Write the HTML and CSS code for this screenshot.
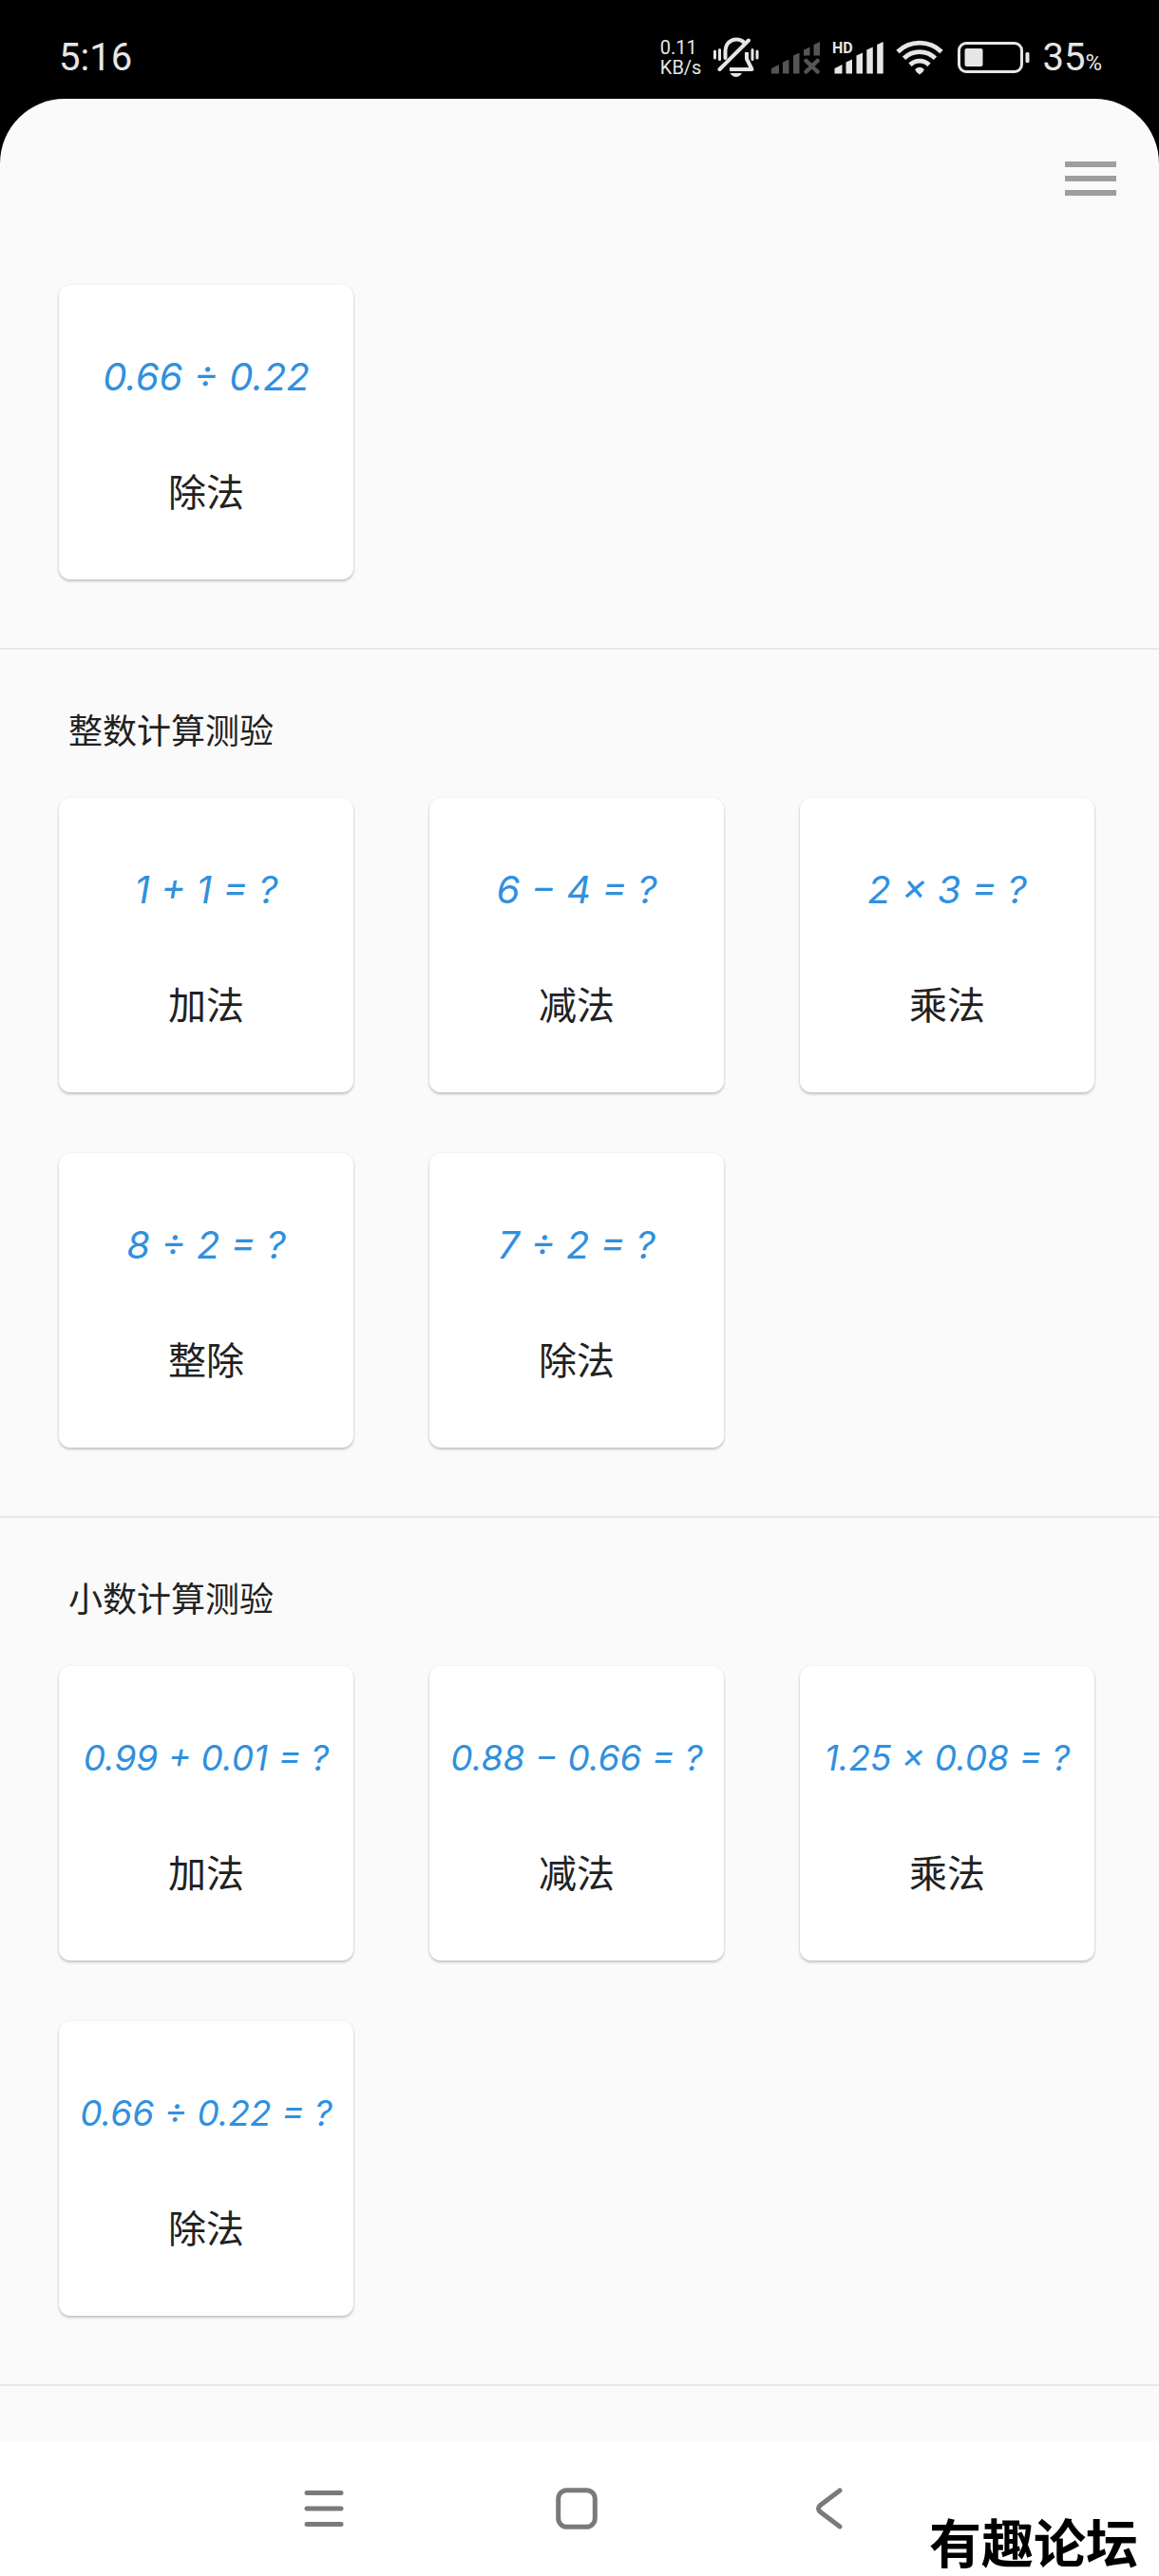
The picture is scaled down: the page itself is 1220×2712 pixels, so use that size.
FILE: index.html
```html
<!DOCTYPE html>
<html lang="zh-CN">
<head>
  <meta charset="utf-8">
  <meta name="viewport" content="width=device-width">
  <title>计算测验</title>
  <link rel="stylesheet" href="styles.css">
</head>
<body>
  <div class="status-bar">
    <span class="time">5:16</span>
    <div class="status-icons">
      <span class="net-speed">0.11<br>KB/s</span>
      <svg class="bell" width="48" height="44" viewBox="0 0 48 44" fill="none" stroke="#e6e6e6" stroke-width="4" stroke-linecap="round" stroke-linejoin="round">
        <path d="M1.5 15v7M6.5 13.5v10M41 13.5v10M46 15v7" stroke-width="3"/>
        <path d="M12.5 22v-7C12.5 7 18 2.500 24 2.500c3 0 6 1 8 3"/>
        <path d="M35 16v7l5.500 11H17" stroke-linecap="butt"/>
        <path d="M6.500 34L37 3.500"/>
        <path d="M17.500 38H30q-2.500 4-6.200 4t-6.300-4z" fill="#e6e6e6" stroke="none"/>
      </svg>
      <svg class="signal" width="51" height="34" viewBox="0 0 51 34" fill="#555">
        <path d="M0 28l8-4v9.500H0zM12 21.500l6.500-3v15H12zM23 14.500l6.500-3v22H23zM34 8.500l6.500-3v9H34zM44.500 3l6.500-3v14.500h-6.500z"/>
        <path d="M36.500 20l12 11.500M48.500 20l-12 11.500" stroke="#555" stroke-width="4.500" stroke-linecap="round"/>
      </svg>
      <svg class="signal-hd" width="54" height="42" viewBox="0 -4 54 42" fill="#e6e6e6">
        <path d="M2.500 28l8-4v9.500h-8zM14.500 21.500l6.500-3v15h-6.500zM25.500 14.500l6.500-3v22h-6.500zM36.300 8.500l6.500-3v28h-6.500zM47.200 3l6.500-3v33.500h-6.500z"/>
        <text class="hd-text" x="0" y="12">HD</text>
      </svg>
      <svg class="wifi" width="50" height="37" viewBox="0 0 50 37" fill="none" stroke="#e6e6e6" stroke-width="4.800">
        <path d="M2 12.500a33 33 0 0 1 46 0M8.500 19.300a23.700 23.700 0 0 1 33 0M15 26.200a14.300 14.300 0 0 1 20 0"/>
        <path d="M20.200 31q4.800-4.500 9.600 0-.5 2.500-4.800 5.500-4.300-3-4.800-5.500z" fill="#e6e6e6" stroke="none"/>
      </svg>
      <svg class="battery" width="76" height="33" viewBox="0 0 76 33" fill="#e6e6e6">
        <rect x="1.500" y="1.500" width="66" height="30" rx="7.500" fill="none" stroke="#e6e6e6" stroke-width="3"/>
        <rect x="7.500" y="7" width="19" height="19" rx="2"/>
        <rect x="71.500" y="11" width="4" height="11" rx="1.500"/>
      </svg>
      <span class="percent">35<small>%</small></span>
    </div>
  </div>

  <main class="page">
    <header class="toolbar">
      <button class="menu-btn" aria-label="菜单"><i></i><i></i><i></i></button>
    </header>

    <section class="group">
      <div class="cards">
        <button class="card"><em>0.66 ÷ 0.22</em><span>除法</span></button>
      </div>
    </section>

    <section class="group">
      <h2>整数计算测验</h2>
      <div class="cards">
        <button class="card"><em>1 + 1 = ?</em><span>加法</span></button>
        <button class="card"><em>6 − 4 = ?</em><span>减法</span></button>
        <button class="card"><em>2 × 3 = ?</em><span>乘法</span></button>
        <button class="card"><em>8 ÷ 2 = ?</em><span>整除</span></button>
        <button class="card"><em>7 ÷ 2 = ?</em><span>除法</span></button>
      </div>
    </section>

    <section class="group decimals">
      <h2>小数计算测验</h2>
      <div class="cards">
        <button class="card"><em>0.99 + 0.01 = ?</em><span>加法</span></button>
        <button class="card"><em>0.88 − 0.66 = ?</em><span>减法</span></button>
        <button class="card"><em>1.25 × 0.08 = ?</em><span>乘法</span></button>
        <button class="card"><em>0.66 ÷ 0.22 = ?</em><span>除法</span></button>
      </div>
    </section>
  </main>

  <nav class="nav-bar">
    <button aria-label="最近任务">
      <svg width="44" height="44" viewBox="0 0 44 44"><path d="M4 5.500h36M4 22h36M4 38.500h36"/></svg>
    </button>
    <button aria-label="主屏幕">
      <svg width="44" height="44" viewBox="0 0 44 44"><rect x="2.700" y="2.700" width="38.600" height="38.600" rx="9"/></svg>
    </button>
    <button aria-label="返回">
      <svg width="44" height="44" viewBox="0 0 44 44"><path d="M33 3L12.500 18.500q-4 3.500 0 7L33 41"/></svg>
    </button>
    <span class="watermark">有趣论坛</span>
  </nav>
</body>
</html>
```
FILE: styles.css
```css
* {
  box-sizing: border-box;
}

body {
  margin: 0;
  min-height: 100vh;
  display: flex;
  flex-direction: column;
  background-color: #000;
  color: #212121;
  font-family: "Noto Sans", "Noto Sans CJK SC", sans-serif;
}

button {
  padding: 0;
  border: none;
  background: none;
  color: inherit;
  font-family: inherit;
  cursor: pointer;
}

/* status bar */
.status-bar {
  display: flex;
  justify-content: space-between;
  align-items: center;
  height: 104px;
  padding: 17px 60px 0 62px;
  color: #e6e6e6;
  font-family: Roboto, sans-serif;
}

.time,
.percent {
  font-size: 40px;
  line-height: 44px;
}

.percent small {
  font-size: 24px;
  line-height: 24px;
}

.status-icons {
  display: flex;
  align-items: center;
  gap: 13px;
}

.net-speed {
  font-size: 20px;
  line-height: 21px;
}

.battery {
  margin-left: 2px;
}

.hd-text {
  font-size: 16px;
  font-weight: bold;
}

/* content */
.page {
  flex: 1;
  background-color: #fafafa;
  border-radius: 68px 68px 0 0;
}

.toolbar {
  display: flex;
  justify-content: flex-end;
  padding: 66px 45px 94px;
}

.menu-btn {
  display: flex;
  flex-direction: column;
  gap: 9px;
  width: 54px;
}

.menu-btn i {
  height: 6px;
  width: 100%;
  background-color: #9e9e9e;
}

.group {
  padding: 0 68px 72px 62px;
  border-bottom: 2px solid #e8e8e8;
}

h2 {
  margin: 0;
  padding: 62px 10px 46px;
  font-size: 36px;
  line-height: 48px;
  font-weight: 400;
}

.cards {
  display: grid;
  grid-template-columns: repeat(3, 1fr);
  gap: 64px 80px;
}

.card {
  display: flex;
  flex-direction: column;
  align-items: center;
  justify-content: center;
  gap: 65px;
  aspect-ratio: 1;
  padding-top: 4px;
  background-color: #fff;
  border-radius: 12px;
  box-shadow: 0 2px 3px rgba(0, 0, 0, 0.22), 0 0 3px rgba(0, 0, 0, 0.06);
  font-size: 40px;
  line-height: 56px;
  white-space: nowrap;
}

.card em {
  color: #3090de;
  font-family: Inter, sans-serif;
  font-size: 40px;
}

.decimals .card em {
  font-size: 37px;
}

/* system navigation */
.nav-bar {
  position: relative;
  display: flex;
  justify-content: center;
  align-items: center;
  gap: 222px;
  height: 142px;
  padding-right: 6px;
  background-color: #fff;
}

.nav-bar button,
.nav-bar svg {
  display: block;
}

.nav-bar svg {
  fill: none;
  stroke: #7a7a7a;
  stroke-width: 5px;
  stroke-linecap: round;
}

.watermark {
  position: absolute;
  right: 22px;
  bottom: 2px;
  color: #000;
  font-family: KaiTi, "Noto Sans CJK SC", cursive;
  font-size: 55px;
  line-height: 72px;
  font-weight: 700;
}
```
